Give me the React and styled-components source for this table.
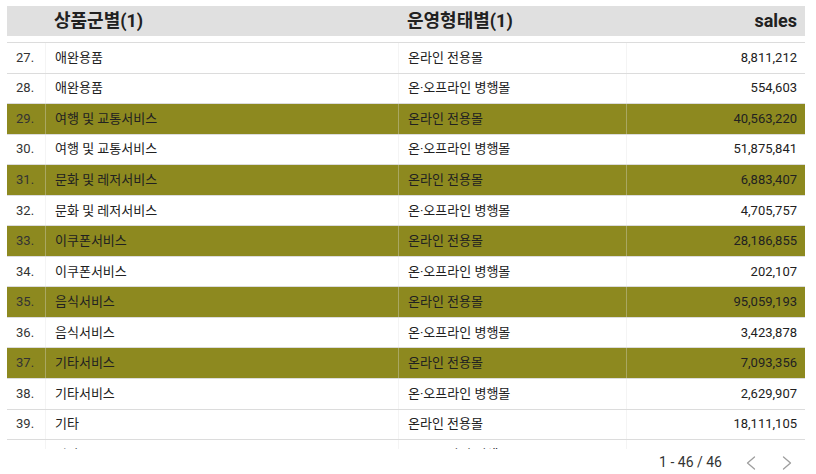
import React from "react"
import styled, { createGlobalStyle } from "styled-components"

const GlobalStyle = createGlobalStyle`
  html, body {
    margin: 0;
    padding: 0;
    background: #ffffff;
  }
  body {
    font-family: "Roboto", "Noto Sans CJK KR", sans-serif;
    color: #212121;
  }
`

const COLS = "38px 353px 228px 1fr"
const OLIVE = "#8d891f"

const Wrapper = styled.div`
  width: 816px;
  padding: 6px 11px 0 7px;
  height: 474px;
  box-sizing: border-box;
  display: flex;
  flex-direction: column;
`

const HeaderRow = styled.div`
  display: grid;
  grid-template-columns: ${COLS};
  height: 30px;
  background: #e0e0e0;
  align-items: center;
  font-size: 18px;
  line-height: 22px;
  font-weight: 700;
  color: #212121;
`

const HeadCell = styled.div`
  padding: 0 ${({ $right }) => ($right ? "8px" : "9px")};
  text-align: ${({ $right }) => ($right ? "right" : "left")};
  white-space: nowrap;
`

// scrolled body: top spacer is what's left of the row above
const Body = styled.div`
  height: 413px;
  padding-top: 6px;
  box-sizing: border-box;
  overflow: hidden;
`

const Row = styled.div`
  display: grid;
  grid-template-columns: ${COLS};
  height: 30.55px;
  box-sizing: border-box;
  border-top: 1px solid #dcdcdc;
  background: ${({ $hl }) => ($hl ? OLIVE : "#ffffff")};
  font-size: 13px;
  line-height: 16px;
`

const Cell = styled.div`
  display: flex;
  align-items: center;
  justify-content: ${({ $right }) => ($right ? "flex-end" : "flex-start")};
  padding: 0 ${({ $right }) => ($right ? "8px" : "9px")};
  border-left: ${({ $first }) =>
    $first ? "none" : "1px solid rgba(224, 224, 224, 0.35)"};
  white-space: nowrap;
  overflow: hidden;
`

const IndexCell = styled(Cell)`
  padding: 0 0 0 9px;
  color: #333333;
`

const Footer = styled.div`
  flex: 1;
  display: flex;
  align-items: center;
  justify-content: flex-end;
  font-size: 14px;
  line-height: 18px;
  color: #333333;
`

const PageInfo = styled.span`
  margin-right: 11px;
`

const NavButton = styled.span`
  width: 36px;
  height: 24px;
  display: inline-flex;
  align-items: center;
  justify-content: center;
  color: #9e9e9e;
  padding-top: 3px;
  box-sizing: border-box;
`

const Chevron = ({ dir }) => (
  <svg width="10" height="14" viewBox="0 0 10 14" fill="none">
    <path
      d={dir === "left" ? "M8.5 1L1.5 7l7 6" : "M1.5 1l7 6-7 6"}
      stroke="currentColor"
      strokeWidth="1.3"
      strokeLinecap="round"
      strokeLinejoin="round"
    />
  </svg>
)

const rows = [
  [27, "애완용품", "온라인 전용몰", "8,811,212", false],
  [28, "애완용품", "온·오프라인 병행몰", "554,603", false],
  [29, "여행 및 교통서비스", "온라인 전용몰", "40,563,220", true],
  [30, "여행 및 교통서비스", "온·오프라인 병행몰", "51,875,841", false],
  [31, "문화 및 레저서비스", "온라인 전용몰", "6,883,407", true],
  [32, "문화 및 레저서비스", "온·오프라인 병행몰", "4,705,757", false],
  [33, "이쿠폰서비스", "온라인 전용몰", "28,186,855", true],
  [34, "이쿠폰서비스", "온·오프라인 병행몰", "202,107", false],
  [35, "음식서비스", "온라인 전용몰", "95,059,193", true],
  [36, "음식서비스", "온·오프라인 병행몰", "3,423,878", false],
  [37, "기타서비스", "온라인 전용몰", "7,093,356", true],
  [38, "기타서비스", "온·오프라인 병행몰", "2,629,907", false],
  [39, "기타", "온라인 전용몰", "18,111,105", false],
  [40, "기타", "온·오프라인 병행몰", "4,284,690", false],
]

const App = () => (
  <>
    <GlobalStyle />
    <Wrapper>
      <HeaderRow>
        <HeadCell />
        <HeadCell>상품군별(1)</HeadCell>
        <HeadCell>운영형태별(1)</HeadCell>
        <HeadCell $right>sales</HeadCell>
      </HeaderRow>
      <Body>
        {rows.map(([n, cat, type, sales, hl]) => (
          <Row key={n} $hl={hl}>
            <IndexCell $first>{n}.</IndexCell>
            <Cell>{cat}</Cell>
            <Cell>{type}</Cell>
            <Cell $right>{sales}</Cell>
          </Row>
        ))}
      </Body>
      <Footer>
        <PageInfo>1 - 46 / 46</PageInfo>
        <NavButton>
          <Chevron dir="left" />
        </NavButton>
        <NavButton>
          <Chevron dir="right" />
        </NavButton>
      </Footer>
    </Wrapper>
  </>
)

export default App
